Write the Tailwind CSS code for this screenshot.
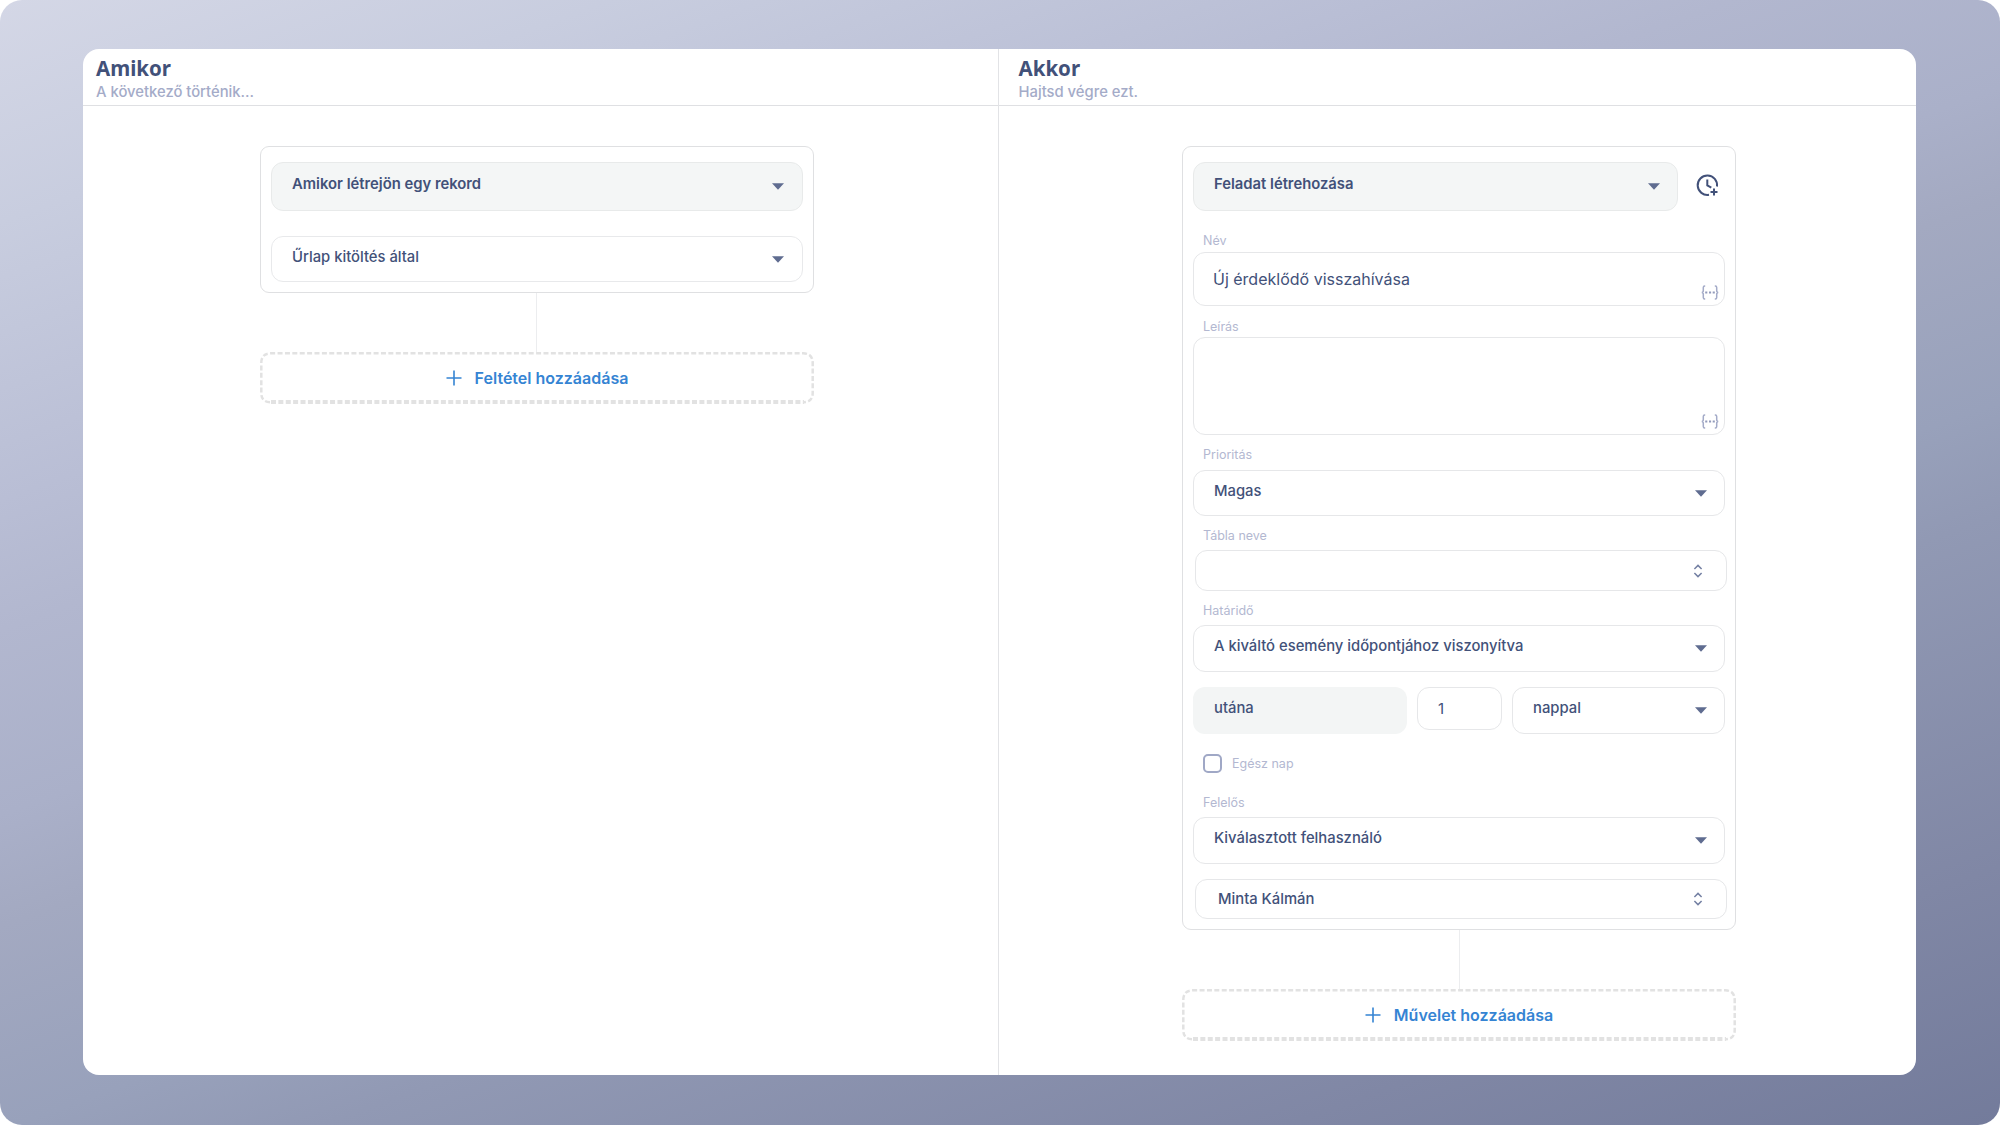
<!DOCTYPE html>
<html lang="hu">
<head>
  <meta charset="UTF-8">
  <meta name="viewport" content="width=device-width, initial-scale=1.0">
  <title>Automatizálás</title>
  <script src="https://cdn.jsdelivr.net/npm/@tailwindcss/browser@4"></script>
</head>
<body class="bg-white font-['Inter','Liberation_Sans',sans-serif] text-[#425179]">
  <!-- Icons -->
  <svg class="hidden">
    <symbol id="caret" viewBox="0 0 12 7"><path d="M0 0.3h12L6 6.7z" fill="currentColor"/></symbol>
    <symbol id="updown" viewBox="0 0 10 14"><path d="M1.4 5L5 1.4 8.6 5M1.4 9L5 12.6 8.6 9" fill="none" stroke="currentColor" stroke-width="1.5"/></symbol>
    <symbol id="braces" viewBox="0 0 18 15"><path d="M4.2 1H3.700Q2.300 1 2.300 2.500V5.500Q2.300 7.500 0.700 7.500Q2.300 7.500 2.300 9.500V12.500Q2.300 14 3.700 14H4.200M13.800 1H14.300Q15.700 1 15.700 2.500V5.500Q15.700 7.500 17.300 7.500Q15.700 7.500 15.700 9.500V12.500Q15.700 14 14.300 14H13.800" fill="none" stroke="currentColor" stroke-width="1.5"/><path d="M4.200 6.500h2.100v2H4.200zM8 6.500h2.100v2H8zM11.700 6.500h2.100v2h-2.100z" fill="#939bbb"/></symbol>
    <symbol id="plus" viewBox="0 0 16 16"><path d="M8 0.5v15M0.5 8h15" fill="none" stroke="currentColor" stroke-width="1.6"/></symbol>
    <!-- Dashed frame, bottom edge is thicker -->
    <symbol id="dashes" viewBox="0 0 555 52"><path d="M10 50.2Q1.3 50 1.3 41V11Q1.3 1.3 11 1.3H544Q553.7 1.3 553.7 11V41Q553.7 50 545 50.2" fill="none" stroke="currentColor" stroke-width="2.5" stroke-dasharray="5 2.4"/><path d="M11 50H545" fill="none" stroke="currentColor" stroke-width="4" stroke-dasharray="5 2.4"/></symbol>
  </svg>

  <div class="flex h-[1125px] w-[2000px] rounded-[22px] bg-[linear-gradient(160deg,#d4d7e6_0%,#c8cddf_12%,#b9bed5_27%,#b2b7cf_34%,#aab0c9_44%,#a3a9c1_50%,#98a1bb_61%,#9199b4_67%,#8087a5_86%,#737b9b_100%)] pt-[49px] pr-[84px] pb-[50px] pl-[83px]">
    <div class="flex w-full overflow-hidden rounded-2xl bg-white">

      <!-- Amikor -->
      <section class="flex w-[916px] flex-col border-r border-[#e2e3e6]">
        <header class="h-[57px] border-b border-[#dfe0e3] pt-[5px] pl-[13px]">
          <h1 class="font-['Noto_Sans'] text-[20.5px] leading-[28px] font-bold">Amikor</h1>
          <p class="text-[14.8px] leading-[21px] font-medium text-[#a4abc8]">A következő történik...</p>
        </header>
        <div class="flex flex-col pt-[40px] pl-[177px]">
          <div class="flex h-[147px] w-[554px] flex-col rounded-[9px] border border-[#dfe0e2] pt-[15px] pr-[10px] pl-[10px]">
            <div class="flex h-[49px] items-center justify-between rounded-xl border border-[#e8eaea] bg-[#f4f6f6] pr-[18px] pl-5">
              <span class="pb-[5px] text-[14.8px] font-semibold">Amikor létrejön egy rekord</span>
              <svg class="h-[7px] w-3 text-[#5f6c90]"><use href="#caret"/></svg>
            </div>
            <div class="mt-[25px] flex h-[46px] items-center justify-between rounded-xl border border-[#e8e9eb] pr-[18px] pl-5">
              <span class="pb-[4px] text-[14.8px] font-medium">Űrlap kitöltés által</span>
              <svg class="h-[7px] w-3 text-[#5f6c90]"><use href="#caret"/></svg>
            </div>
          </div>
          <div class="ml-[276px] h-[59px] w-px bg-[#ecedef]"></div>
          <button class="relative flex h-[52px] w-[554px] items-center justify-center gap-[13px] text-[16px] font-semibold text-[#3584d3]">
            <svg class="absolute inset-0 h-[52px] w-[554px] text-[#e2e2e2]"><use href="#dashes"/></svg>
            <svg class="size-4"><use href="#plus"/></svg>
            <span>Feltétel hozzáadása</span>
          </button>
        </div>
      </section>

      <!-- Akkor -->
      <section class="flex w-[917px] flex-col">
        <header class="h-[57px] border-b border-[#dfe0e3] pt-[5px] pl-[19.5px]">
          <h1 class="font-['Noto_Sans'] text-[20.5px] leading-[28px] font-bold">Akkor</h1>
          <p class="text-[14.8px] leading-[21px] font-medium text-[#a4abc8]">Hajtsd végre ezt.</p>
        </header>
        <div class="flex flex-col pt-[40px] pl-[183px]">
          <div class="flex h-[784px] w-[554px] flex-col rounded-[9px] border border-[#dfe0e2] pt-[15px] pl-[10px]">
            <div class="flex items-center">
              <div class="flex h-[49px] w-[485px] items-center justify-between rounded-xl border border-[#e8eaea] bg-[#f4f6f6] pr-[17px] pl-5">
                <span class="pb-[5px] text-[14.8px] font-semibold">Feladat létrehozása</span>
                <svg class="h-[7px] w-3 text-[#5f6c90]"><use href="#caret"/></svg>
              </div>
              <svg class="mb-[2px] ml-[17.5px] size-[23px]" viewBox="0 0 23 23" fill="none" stroke="currentColor" stroke-width="2">
                <path d="M21 12.5A9.7 9.7 0 1 0 13 20.8M11.3 5.5V11.5L15.3 13.7"/>
                <path d="M18 14.5v7M14.5 18h7"/>
              </svg>
            </div>

            <label class="mt-[22px] ml-[10px] text-[12.5px] leading-[16px] text-[#b3b8d1]">Név</label>
            <div class="mt-[3px] flex h-[54px] w-[532px] items-center justify-between rounded-xl border border-[#e6e7e9] pr-[5px] pl-[19px]">
              <span class="text-[16px]">Új érdeklődő visszahívása</span>
              <svg class="mb-[5px] h-[15px] w-[18px] self-end text-[#a4abc8]"><use href="#braces"/></svg>
            </div>

            <label class="mt-[13px] ml-[10px] text-[12.5px] leading-[16px] text-[#b3b8d1]">Leírás</label>
            <div class="mt-[2px] flex h-[98px] w-[532px] items-end justify-end rounded-xl border border-[#e6e7e9] pr-[5px] pb-[5px]">
              <svg class="h-[15px] w-[18px] text-[#a4abc8]"><use href="#braces"/></svg>
            </div>

            <label class="mt-[12px] ml-[10px] text-[12.5px] leading-[16px] text-[#b3b8d1]">Prioritás</label>
            <div class="mt-[7px] flex h-[46px] w-[532px] items-center justify-between rounded-xl border border-[#e6e7e9] pr-[17px] pl-5">
              <span class="pb-[4px] text-[14.8px] font-medium">Magas</span>
              <svg class="h-[7px] w-3 text-[#5f6c90]"><use href="#caret"/></svg>
            </div>

            <label class="mt-[12px] ml-[10px] text-[12.5px] leading-[16px] text-[#b3b8d1]">Tábla neve</label>
            <div class="mt-[6px] ml-[2px] flex h-[41px] w-[532px] items-center justify-end rounded-xl border border-[#e6e7e9] pr-[23px]">
              <svg class="h-[14px] w-[10px] text-[#7480a3]"><use href="#updown"/></svg>
            </div>

            <label class="mt-[12px] ml-[10px] text-[12.5px] leading-[16px] text-[#b3b8d1]">Határidő</label>
            <div class="mt-[6px] flex h-[47px] w-[532px] items-center justify-between rounded-xl border border-[#e6e7e9] pr-[17px] pl-5">
              <span class="pb-[4px] text-[14.8px] font-medium">A kiváltó esemény időpontjához viszonyítva</span>
              <svg class="h-[7px] w-3 text-[#5f6c90]"><use href="#caret"/></svg>
            </div>

            <div class="mt-[15px] flex w-[532px] items-start gap-[10px]">
              <div class="flex h-[47px] w-[214px] items-center rounded-xl bg-[#f3f5f5] pl-[21px]">
                <span class="pb-[4px] text-[14.8px] font-medium">utána</span>
              </div>
              <div class="flex h-[43px] w-[85px] items-center rounded-xl border border-[#e6e7e9] pl-5">
                <span class="pt-px text-[15px]">1</span>
              </div>
              <div class="flex h-[47px] w-[213px] items-center justify-between rounded-xl border border-[#e6e7e9] pr-[17px] pl-5">
                <span class="pb-[4px] text-[14.8px] font-medium">nappal</span>
                <svg class="h-[7px] w-3 text-[#5f6c90]"><use href="#caret"/></svg>
              </div>
            </div>

            <label class="mt-[20px] ml-[10px] flex items-center gap-[10px] text-[12.5px] leading-[19px] text-[#b3b8d1]">
              <span class="size-[19px] rounded-[5px] border-2 border-[#a0a8c6]"></span>
              <span>Egész nap</span>
            </label>

            <label class="mt-[22px] ml-[10px] text-[12.5px] leading-[16px] text-[#b3b8d1]">Felelős</label>
            <div class="mt-[6px] flex h-[47px] w-[532px] items-center justify-between rounded-xl border border-[#e6e7e9] pr-[17px] pl-5">
              <span class="pb-[4px] text-[14.8px] font-medium">Kiválasztott felhasználó</span>
              <svg class="h-[7px] w-3 text-[#5f6c90]"><use href="#caret"/></svg>
            </div>
            <div class="mt-[15px] ml-[2px] flex h-[40px] w-[532px] items-center justify-between rounded-xl border border-[#e6e7e9] pr-[23px] pl-[22px]">
              <span class="pt-px text-[14.8px] font-medium">Minta Kálmán</span>
              <svg class="h-[14px] w-[10px] text-[#7480a3]"><use href="#updown"/></svg>
            </div>
          </div>
          <div class="ml-[277px] h-[59px] w-px bg-[#ecedef]"></div>
          <button class="relative flex h-[52px] w-[554px] items-center justify-center gap-[13px] text-[16px] font-semibold text-[#3584d3]">
            <svg class="absolute inset-0 h-[52px] w-[554px] text-[#e2e2e2]"><use href="#dashes"/></svg>
            <svg class="size-4"><use href="#plus"/></svg>
            <span>Művelet hozzáadása</span>
          </button>
        </div>
      </section>
    </div>
  </div>
</body>
</html>
